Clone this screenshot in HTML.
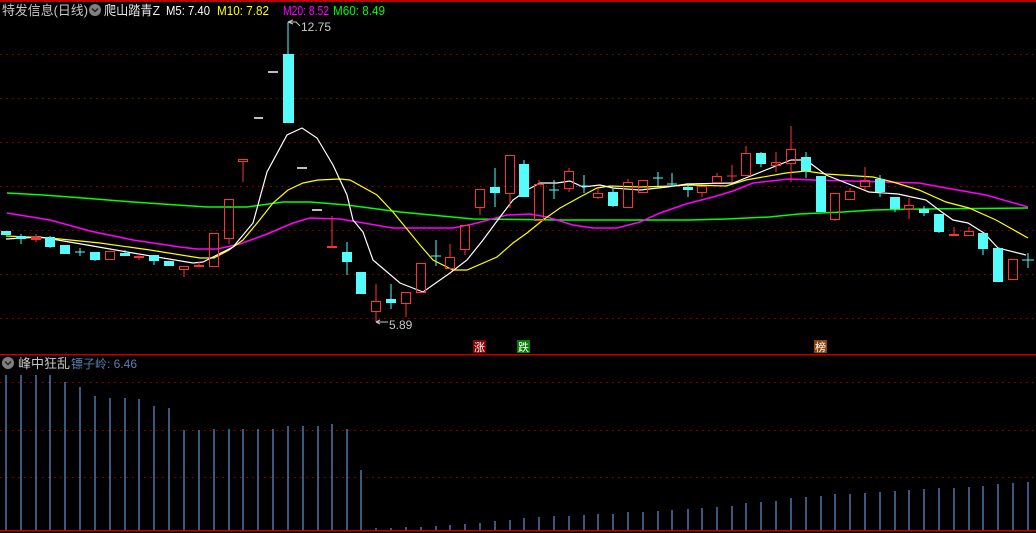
<!DOCTYPE html>
<html><head><meta charset="utf-8"><style>
html,body{margin:0;padding:0;background:#000;width:1036px;height:533px;overflow:hidden}
svg{display:block}
text{font-family:"Liberation Sans","Noto Sans CJK SC",sans-serif}
.c{fill:#54fcfc}.cw{stroke:#54fcfc;stroke-width:1}
.r{fill:none;stroke:#ff3232;stroke-width:1}.rw{stroke:#ff3232;stroke-width:1}
.rf{fill:#ff3232}
.g{stroke:#a00000;stroke-width:1;stroke-dasharray:1.5 4.5}
.b{stroke:#4f77aa;stroke-width:1.5}
</style></head><body>
<svg width="1036" height="533" xmlns="http://www.w3.org/2000/svg">
<rect x="0" y="0" width="1036" height="2" fill="#c00000"/>
<g class="g">
<line x1="0" y1="54.5" x2="1036" y2="54.5"/><line x1="0" y1="98.5" x2="1036" y2="98.5"/>
<line x1="0" y1="142.5" x2="1036" y2="142.5"/><line x1="0" y1="186.5" x2="1036" y2="186.5"/>
<line x1="0" y1="230.5" x2="1036" y2="230.5"/><line x1="0" y1="274.5" x2="1036" y2="274.5"/>
<line x1="0" y1="318.5" x2="1036" y2="318.5"/>
<line x1="0" y1="382.5" x2="1036" y2="382.5"/><line x1="0" y1="430.5" x2="1036" y2="430.5"/>
<line x1="0" y1="477.5" x2="1036" y2="477.5"/>
</g>
<rect x="0" y="354" width="1036" height="1.5" fill="#c00000"/>
<rect x="0" y="530" width="1036" height="1.5" fill="#c00000"/>

<text x="2" y="15" font-size="13" fill="#c8c8c8" textLength="86" lengthAdjust="spacingAndGlyphs">特发信息(日线)</text>
<circle cx="95" cy="10" r="6" fill="#808080"/><path d="M92 8.5 L95 11.5 L98 8.5" stroke="#222" stroke-width="1.5" fill="none"/>
<text x="104" y="15" font-size="13" fill="#e8e8e8" textLength="56" lengthAdjust="spacingAndGlyphs">爬山踏青Z</text>
<text x="166" y="15" font-size="12.5" fill="#ffffff" textLength="44" lengthAdjust="spacingAndGlyphs">M5: 7.40</text>
<text x="217" y="15" font-size="12.5" fill="#ffff00" textLength="52" lengthAdjust="spacingAndGlyphs">M10: 7.82</text>
<text x="283" y="15" font-size="12.5" fill="#ff00ff" textLength="46" lengthAdjust="spacingAndGlyphs">M20: 8.52</text>
<text x="333" y="15" font-size="12.5" fill="#00ff00" textLength="52" lengthAdjust="spacingAndGlyphs">M60: 8.49</text>

<polyline fill="none" stroke="#00ff00" stroke-width="1.5" points="7,193 43,195 83,198 133,202 177,205 207,207 247,207 283,202 310,202 347,205 400,212 473,219 560,220 690,220 726,219 769,217 799,214 843,212 873,210 919,209 1028,208"/>
<polyline fill="none" stroke="#ff00ff" stroke-width="1.5" points="7,213 50,220 90,231 133,240 180,247 197,249 217,249 240,244 267,234 293,223 310,218 340,219 393,228 453,228 473,224 507,215 530,214 547,217 573,225 593,228 617,228 640,222 660,213 686,204 713,197 733,191 753,183 789,179 813,180 886,182 919,183 946,188 986,195 1028,207"/>
<polyline fill="none" stroke="#ffff00" stroke-width="1.2" points="6,236 50,238 100,243 150,250 200,258 214,258 229,250 243,240 258,222 273,203 288,190 303,183 318,180 340,179 350,180 377,195 393,212 420,245 433,260 453,270 467,270 497,257 513,243 527,233 543,220 560,208 580,197 597,188 610,186 640,187 673,186 687,185 726,186 746,180 786,173 806,171 826,174 873,177 893,182 919,190 946,202 969,208 996,220 1028,238"/>
<polyline fill="none" stroke="#ffffff" stroke-width="1.2" points="6,239 40,237 87,245 133,253 193,263 203,262 213,257 233,247 253,223 267,172 287,135 302,128 317,138 333,165 347,195 353,220 363,232 373,260 400,283 423,292 450,273 467,260 483,240 500,217 513,200 527,190 540,183 557,183 570,181 583,187 600,185 613,188 640,190 667,187 687,184 733,183 791,160 806,160 826,175 869,192 898,194 926,200 939,210 953,220 968,223 984,233 998,248 1026,255"/>

<g stroke="#fff" stroke-width="1.5"><line x1="254" y1="118" x2="263" y2="118"/><line x1="268" y1="72" x2="278" y2="72"/><line x1="297" y1="168" x2="307" y2="168"/><line x1="312" y1="210" x2="322" y2="210"/></g>

<g class="cw">
<line x1="21" y1="234" x2="21" y2="244"/><line x1="50" y1="236" x2="50" y2="248"/>
<line x1="80" y1="248" x2="80" y2="256"/><line x1="75" y1="252" x2="85" y2="252"/>
<line x1="95" y1="252" x2="95" y2="261"/><line x1="125" y1="250" x2="125" y2="256"/>
<line x1="154" y1="255" x2="154" y2="265"/><line x1="288" y1="22" x2="288" y2="60"/>
<line x1="347" y1="242" x2="347" y2="275"/><line x1="391" y1="284" x2="391" y2="309"/>
<line x1="436" y1="240" x2="436" y2="266"/><line x1="431" y1="256" x2="441" y2="256"/>
<line x1="495" y1="168" x2="495" y2="207"/><line x1="524" y1="160" x2="524" y2="170"/>
<line x1="554" y1="180" x2="554" y2="199"/><line x1="549" y1="190" x2="559" y2="190"/>
<line x1="584" y1="175" x2="584" y2="193"/><line x1="579" y1="186" x2="589" y2="186"/>
<line x1="613" y1="188" x2="613" y2="207"/>
<line x1="658" y1="172" x2="658" y2="186"/><line x1="653" y1="178" x2="663" y2="178"/>
<line x1="672" y1="173" x2="672" y2="187"/><line x1="667" y1="184" x2="677" y2="184"/>
<line x1="688" y1="183" x2="688" y2="197"/><line x1="761" y1="152" x2="761" y2="167"/>
<line x1="806" y1="152" x2="806" y2="178"/><line x1="880" y1="175" x2="880" y2="197"/>
<line x1="895" y1="200" x2="895" y2="212"/><line x1="924" y1="206" x2="924" y2="216"/>
<line x1="939" y1="220" x2="939" y2="233"/><line x1="983" y1="240" x2="983" y2="255"/>
<line x1="1028" y1="253" x2="1028" y2="268"/><line x1="1022" y1="260" x2="1034" y2="260"/>
</g>
<g class="c">
<rect x="1" y="231" width="10" height="4"/><rect x="16" y="236" width="10" height="3"/>
<rect x="45" y="237" width="10" height="10"/><rect x="60" y="245" width="10" height="9"/>
<rect x="90" y="252" width="10" height="8"/><rect x="120" y="253" width="10" height="3"/>
<rect x="149" y="255" width="10" height="6"/><rect x="164" y="261" width="10" height="5"/>
<rect x="283" y="54" width="11" height="69"/>
<rect x="342" y="252" width="10" height="10"/><rect x="356" y="272" width="10" height="22"/>
<rect x="386" y="299" width="10" height="4"/><rect x="490" y="187" width="10" height="6"/>
<rect x="519" y="164" width="10" height="33"/><rect x="608" y="192" width="10" height="14"/>
<rect x="683" y="187" width="10" height="3"/><rect x="756" y="153" width="10" height="11"/>
<rect x="801" y="157" width="10" height="14"/><rect x="816" y="176" width="10" height="36"/>
<rect x="875" y="179" width="10" height="13"/><rect x="890" y="197" width="10" height="12"/>
<rect x="919" y="209" width="10" height="4"/><rect x="934" y="214" width="10" height="18"/>
<rect x="978" y="233" width="10" height="16"/><rect x="993" y="248" width="10" height="34"/>
</g>

<g class="rw">
<line x1="36" y1="234" x2="36" y2="242"/><line x1="110" y1="259" x2="110" y2="260"/>
<line x1="139" y1="254" x2="139" y2="260"/><line x1="184" y1="269" x2="184" y2="277"/>
<line x1="199" y1="262" x2="199" y2="266"/><line x1="229" y1="238" x2="229" y2="244"/>
<line x1="243" y1="162" x2="243" y2="182"/><line x1="332" y1="216" x2="332" y2="248"/>
<line x1="376" y1="284" x2="376" y2="301"/><line x1="376" y1="311" x2="376" y2="322"/>
<line x1="406" y1="303" x2="406" y2="317"/><line x1="450" y1="244" x2="450" y2="257"/>
<line x1="465" y1="249" x2="465" y2="255"/><line x1="480" y1="207" x2="480" y2="215"/>
<line x1="510" y1="193" x2="510" y2="208"/><line x1="539" y1="180" x2="539" y2="184"/>
<line x1="569" y1="168" x2="569" y2="171"/><line x1="569" y1="188" x2="569" y2="192"/>
<line x1="598" y1="188" x2="598" y2="193"/><line x1="598" y1="197" x2="598" y2="199"/>
<line x1="628" y1="179" x2="628" y2="182"/><line x1="702" y1="192" x2="702" y2="197"/>
<line x1="717" y1="173" x2="717" y2="176"/><line x1="732" y1="165" x2="732" y2="182"/>
<line x1="727" y1="176" x2="737" y2="176"/><line x1="746" y1="146" x2="746" y2="153"/>
<line x1="776" y1="152" x2="776" y2="172"/><line x1="791" y1="126" x2="791" y2="149"/>
<line x1="791" y1="163" x2="791" y2="182"/><line x1="835" y1="219" x2="835" y2="221"/>
<line x1="850" y1="188" x2="850" y2="191"/><line x1="865" y1="167" x2="865" y2="180"/>
<line x1="865" y1="186" x2="865" y2="190"/><line x1="909" y1="198" x2="909" y2="205"/>
<line x1="909" y1="209" x2="909" y2="219"/><line x1="954" y1="227" x2="954" y2="236"/>
<line x1="969" y1="227" x2="969" y2="231"/>
</g>
<g class="rf">
<rect x="31" y="237" width="10" height="3"/><rect x="134" y="256" width="10" height="2"/>
<rect x="194" y="265" width="10" height="2"/><rect x="327" y="246" width="10" height="2"/>
<rect x="949" y="234" width="10" height="2"/>
</g>
<g class="r">
<rect x="105.5" y="251.5" width="9" height="8"/><rect x="179.5" y="266.5" width="9" height="3"/>
<rect x="209.5" y="233.5" width="9" height="33"/><rect x="224.5" y="199.5" width="9" height="39"/>
<rect x="238.5" y="159.5" width="9" height="2"/>
<rect x="371.5" y="301.5" width="9" height="10"/><rect x="401.5" y="292.5" width="9" height="11"/>
<rect x="416.5" y="263.5" width="9" height="29"/><rect x="445.5" y="257.5" width="9" height="11"/>
<rect x="460.5" y="225.5" width="9" height="24"/><rect x="475.5" y="189.5" width="9" height="18"/>
<rect x="505.5" y="155.5" width="9" height="38"/><rect x="534.5" y="184.5" width="9" height="36"/>
<rect x="564.5" y="171.5" width="9" height="17"/><rect x="593.5" y="193.5" width="9" height="4"/>
<rect x="623.5" y="182.5" width="9" height="25"/><rect x="638.5" y="180.5" width="9" height="12"/>
<rect x="697.5" y="186.5" width="9" height="6"/><rect x="712.5" y="176.5" width="9" height="6"/>
<rect x="741.5" y="153.5" width="9" height="22"/><rect x="771.5" y="162.5" width="9" height="3"/>
<rect x="786.5" y="149.5" width="9" height="14"/><rect x="830.5" y="193.5" width="9" height="26"/>
<rect x="845.5" y="191.5" width="9" height="8"/><rect x="860.5" y="180.5" width="9" height="6"/>
<rect x="904.5" y="205.5" width="9" height="4"/><rect x="964.5" y="231.5" width="9" height="4"/>
<rect x="1008.5" y="259.5" width="9" height="20"/>
</g>

<path d="M288 22 L293 20 M288 22 L293 24 M288 22 H296 L300 26" stroke="#c8c8c8" fill="none" stroke-width="1"/>
<text x="301" y="31" font-size="12" fill="#c8c8c8">12.75</text>
<path d="M376 322 L380 320 M376 322 L380 324 M376 322 H388" stroke="#c8c8c8" fill="none" stroke-width="1"/>
<text x="389" y="329" font-size="12" fill="#c8c8c8">5.89</text>
<rect x="473" y="340" width="13" height="13" fill="#8b0000"/><text x="474" y="351" font-size="11" fill="#fff">涨</text>
<rect x="517" y="340" width="13" height="13" fill="#008000"/><text x="518" y="351" font-size="11" fill="#fff">跌</text>
<rect x="814" y="340" width="13" height="13" fill="#8b4513"/><text x="815" y="351" font-size="11" fill="#fff">榜</text>

<circle cx="8" cy="363" r="6" fill="#808080"/><path d="M5 361.5 L8 364.5 L11 361.5" stroke="#222" stroke-width="1.5" fill="none"/>
<text x="18" y="368" font-size="13" fill="#c8c8c8">峰中狂乱</text>
<text x="71" y="368" font-size="12" fill="#5a7fb0">镖子岭: 6.46</text>

<g class="b">
<line x1="6" y1="375" x2="6" y2="530"/><line x1="21" y1="375" x2="21" y2="530"/>
<line x1="36" y1="375" x2="36" y2="530"/><line x1="50" y1="375" x2="50" y2="530"/>
<line x1="65" y1="382" x2="65" y2="530"/><line x1="80" y1="387" x2="80" y2="530"/>
<line x1="95" y1="396" x2="95" y2="530"/><line x1="110" y1="398" x2="110" y2="530"/>
<line x1="125" y1="398" x2="125" y2="530"/><line x1="139" y1="399" x2="139" y2="530"/>
<line x1="154" y1="406" x2="154" y2="530"/><line x1="169" y1="408" x2="169" y2="530"/>
<line x1="184" y1="430" x2="184" y2="530"/><line x1="199" y1="430" x2="199" y2="530"/>
<line x1="214" y1="429" x2="214" y2="530"/><line x1="229" y1="429" x2="229" y2="530"/>
<line x1="243" y1="429" x2="243" y2="530"/><line x1="258" y1="429" x2="258" y2="530"/>
<line x1="273" y1="429" x2="273" y2="530"/><line x1="288" y1="426" x2="288" y2="530"/>
<line x1="303" y1="426" x2="303" y2="530"/><line x1="318" y1="426" x2="318" y2="530"/>
<line x1="332" y1="424" x2="332" y2="530"/><line x1="347" y1="429" x2="347" y2="530"/>
<line x1="361" y1="470" x2="361" y2="530"/><line x1="376" y1="528" x2="376" y2="530"/>
<line x1="391" y1="528" x2="391" y2="530"/><line x1="406" y1="527" x2="406" y2="530"/>
<line x1="421" y1="527" x2="421" y2="530"/><line x1="436" y1="526" x2="436" y2="530"/>
<line x1="450" y1="525" x2="450" y2="530"/><line x1="465" y1="524" x2="465" y2="530"/>
<line x1="480" y1="523" x2="480" y2="530"/><line x1="495" y1="521" x2="495" y2="530"/>
<line x1="510" y1="520" x2="510" y2="530"/><line x1="524" y1="518" x2="524" y2="530"/>
<line x1="539" y1="517" x2="539" y2="530"/><line x1="554" y1="516" x2="554" y2="530"/>
<line x1="569" y1="516" x2="569" y2="530"/><line x1="584" y1="515" x2="584" y2="530"/>
<line x1="598" y1="514" x2="598" y2="530"/><line x1="613" y1="514" x2="613" y2="530"/>
<line x1="628" y1="512" x2="628" y2="530"/><line x1="643" y1="512" x2="643" y2="530"/>
<line x1="658" y1="511" x2="658" y2="530"/><line x1="672" y1="510" x2="672" y2="530"/>
<line x1="688" y1="509" x2="688" y2="530"/><line x1="702" y1="508" x2="702" y2="530"/>
<line x1="717" y1="507" x2="717" y2="530"/><line x1="732" y1="506" x2="732" y2="530"/>
<line x1="746" y1="503" x2="746" y2="530"/><line x1="761" y1="502" x2="761" y2="530"/>
<line x1="776" y1="501" x2="776" y2="530"/><line x1="791" y1="498" x2="791" y2="530"/>
<line x1="806" y1="497" x2="806" y2="530"/><line x1="821" y1="496" x2="821" y2="530"/>
<line x1="835" y1="494" x2="835" y2="530"/><line x1="850" y1="494" x2="850" y2="530"/>
<line x1="865" y1="493" x2="865" y2="530"/><line x1="880" y1="492" x2="880" y2="530"/>
<line x1="895" y1="491" x2="895" y2="530"/><line x1="909" y1="490" x2="909" y2="530"/>
<line x1="924" y1="489" x2="924" y2="530"/><line x1="939" y1="488" x2="939" y2="530"/>
<line x1="954" y1="488" x2="954" y2="530"/><line x1="969" y1="487" x2="969" y2="530"/>
<line x1="983" y1="486" x2="983" y2="530"/><line x1="998" y1="484" x2="998" y2="530"/>
<line x1="1013" y1="483" x2="1013" y2="530"/><line x1="1028" y1="482" x2="1028" y2="530"/>
</g>
</svg>
</body></html>
